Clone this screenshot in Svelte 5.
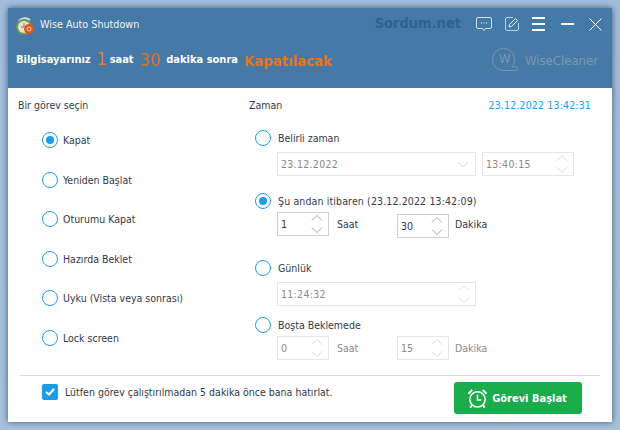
<script>
  const tasks = [
    { label: 'Kapat', on: true },
    { label: 'Yeniden Başlat', on: false },
    { label: 'Oturumu Kapat', on: false },
    { label: 'Hazırda Beklet', on: false },
    { label: 'Uyku (Vista veya sonrası)', on: false },
    { label: 'Lock screen', on: false }
  ];
</script>

{#snippet arrows()}
  <svg class="arrows" width="16" height="22" viewBox="0 0 16 22" fill="none" stroke-width="1">
    <path d="M3 7.500 8 2.500 13 7.500" />
    <path d="M3 14.500 8 19.500 13 14.500" />
  </svg>
{/snippet}

{#snippet radio(on)}
  <span class="radio" class:on></span>
{/snippet}

<div class="desk">
  <div class="window">
    <header>
      <div class="titlebar">
        <svg class="appicon" width="20" height="20" viewBox="0 0 20 20">
          <path d="M4 5 A8 8 0 0 1 15 4" fill="none" stroke="#d8dcd8" stroke-width="2" />
          <circle cx="9" cy="11" r="8" fill="#6f9a58" />
          <circle cx="9" cy="11" r="6" fill="#e6e2d0" />
          <path d="M9 7V11H6" fill="none" stroke="#7a7a6a" stroke-width="1" />
          <circle cx="14" cy="13" r="5" fill="#e2541b" />
          <circle cx="14" cy="13" r="2" fill="none" stroke="#f8d8b0" stroke-width="1" />
        </svg>
        <span class="apptitle">Wise Auto Shutdown</span>
        <span class="sordum">Sordum.net</span>
        <div class="tools">
          <svg width="16" height="15" viewBox="0 0 16 15" fill="none" stroke="#d5e2ee">
            <path d="M2 .5H14Q15.500 .5 15.500 2V10Q15.500 11.500 14 11.500H9.500L8 13.500 6.500 11.500H2Q.5 11.500 .5 10V2Q.5 .5 2 .5Z" />
            <path d="M5 6H6M7.500 6H8.500M10 6H11" stroke="#fff" />
          </svg>
          <svg class="edit" width="14" height="14" viewBox="0 0 14 14" fill="none" stroke="#b9cfe2">
            <path d="M8 .5H2Q.5 .5 .5 2V12Q.5 13.500 2 13.500H12Q13.500 13.500 13.500 12V6" />
            <path d="M4 10 4.500 7.500 10.500 1.500 12.500 3.500 6.500 9.500Z" stroke="#dde8f1" />
          </svg>
          <svg class="menu" width="13" height="14" viewBox="0 0 13 14" stroke="#fff" stroke-width="2">
            <path d="M0 1H13M0 7H13M0 13H13" />
          </svg>
          <svg class="min" width="13" height="2" viewBox="0 0 13 2" stroke="#fff" stroke-width="2">
            <path d="M0 1H13" />
          </svg>
          <svg class="close" width="13" height="13" viewBox="0 0 13 13" stroke="#fff" stroke-width="1">
            <path d="M.5 .5 12.500 12.500M12.500 .5 .5 12.500" />
          </svg>
        </div>
      </div>
      <div class="status">
        <b>Bilgisayarınız</b>
        <span class="n1">1</span>
        <b>saat</b>
        <span class="n2">30</span>
        <b>dakika sonra</b>
        <span class="act">Kapatılacak</span>
        <div class="brand">
          <svg width="26" height="24" viewBox="0 0 26 24" fill="none" stroke="#7f97ad">
            <path d="M20 18.500A11 11 0 1 0 12 22.500H23Q25.500 22.500 25.500 20.500 25.500 18.500 23 18.500 21 18.500 20 20" />
          </svg>
          <span class="bw">W</span>
          <span>WiseCleaner</span>
        </div>
      </div>
    </header>

    <div class="main">
      <section class="left">
        <div class="heading">Bir görev seçin</div>
        <ul>
          {#each tasks as t}
            <li>{@render radio(t.on)}<span>{t.label}</span></li>
          {/each}
        </ul>
      </section>

      <section class="right">
        <div class="headrow">
          <span class="heading">Zaman</span>
          <span class="clock">23.12.2022 13:42:31</span>
        </div>

        <div class="opt first">{@render radio(false)}<span>Belirli zaman</span></div>
        <div class="fields off">
          <div class="field wide"><span class="digits">23.12.2022</span>
            <svg class="chev" width="12" height="7" viewBox="0 0 12 7" fill="none"><path d="M1 1 6 6 11 1" /></svg>
          </div>
          <div class="field time"><span class="digits">13:40:15</span>{@render arrows()}</div>
        </div>

        <div class="opt second">{@render radio(true)}<span class="long">Şu andan itibaren (23.12.2022 13:42:09)</span></div>
        <div class="fields spin">
          <div class="field num"><span>1</span>{@render arrows()}</div>
          <span class="unit saat">Saat</span>
          <div class="field num low"><span>30</span>{@render arrows()}</div>
          <span class="unit">Dakika</span>
        </div>

        <div class="opt third">{@render radio(false)}<span>Günlük</span></div>
        <div class="fields off">
          <div class="field wide"><span class="digits">11:24:32</span>{@render arrows()}</div>
        </div>

        <div class="opt fourth">{@render radio(false)}<span>Boşta Beklemede</span></div>
        <div class="fields spin off">
          <div class="field num"><span>0</span>{@render arrows()}</div>
          <span class="unit saat">Saat</span>
          <div class="field num"><span>15</span>{@render arrows()}</div>
          <span class="unit">Dakika</span>
        </div>
      </section>
    </div>

    <footer>
      <span class="check">
        <svg width="10" height="8" viewBox="0 0 10 8" fill="none" stroke="#fff" stroke-width="2"><path d="M1 4 4 6.500 9 1" /></svg>
      </span>
      <span class="remind">Lütfen görev çalıştırılmadan 5 dakika önce bana hatırlat.</span>
      <button>
        <svg width="21" height="21" viewBox="0 0 22 22" fill="none" stroke="#fff" stroke-width="1.600">
          <circle cx="11" cy="12" r="8" />
          <path d="M11 7V12.500H15" />
          <path d="M1.500 6 5.500 2M16.500 2 20.500 6M5 18.500 3.500 20.500M17 18.500 18.500 20.500" stroke-width="2" />
        </svg>
        <span>Görevi Başlat</span>
      </button>
    </footer>
  </div>
</div>

<style>
  :global(body) {
    background: #a3c0dc;
  }
  .desk {
    width: 620px;
    height: 430px;
    padding: 8px;
    box-sizing: border-box;
    overflow: hidden;
    background: linear-gradient(#a0bddb, #a5c2dc);
    font-family: "DejaVu Sans Condensed", "DejaVu Sans", sans-serif;
    font-stretch: condensed;
    font-size: 10.5px;
    color: #33394a;
  }
  .window {
    width: 604px;
    height: 414px;
    background: #fff;
    box-shadow: 0 0 6px rgba(40, 50, 70, 0.75);
    display: flex;
    flex-direction: column;
  }
  header {
    height: 80px;
    background: #4579a7;
    flex: none;
  }
  .titlebar {
    height: 32px;
    display: flex;
    align-items: center;
    padding: 0 10px 0 7px;
  }
  .appicon {
    margin-top: 3px;
  }
  .apptitle {
    margin-left: 5px;
    font-size: 10.700px;
    color: #eef3f8;
  }
  .sordum {
    margin-left: auto;
    font-size: 14.500px;
    font-weight: 700;
    color: #33608c;
    margin-right: 15px;
    margin-top: -2px;
  }
  .tools {
    display: flex;
    align-items: center;
  }
  .edit { margin-left: 13px; }
  .menu { margin-left: 13px; }
  .min { margin-left: 16px; }
  .close { margin-left: 15px; }
  .status {
    height: 36px;
    margin-top: 1px;
    display: flex;
    align-items: center;
    padding: 0 14px 0 8px;
    color: #fff;
    gap: 6px;
  }
  .status b {
    font-size: 11px;
  }
  .n1, .n2 {
    color: #ee7d16;
    font-size: 17px;
  }
  .n1 {
    width: 8px;
    margin-right: -1px;
  }
  .n2 {
    color: #d9701c;
    font-size: 18px;
  }
  .act {
    font-size: 14.800px;
    font-weight: 700;
    color: #e7751a;
    margin-top: 2px;
  }
  .brand {
    margin-left: auto;
    display: flex;
    align-items: center;
    position: relative;
    gap: 7px;
    color: #7f97ad;
    font-size: 13px;
    margin-top: 2px;
  }
  .bw {
    position: absolute;
    left: 7px;
    top: 3px;
  }
  .main {
    flex: 1;
    display: flex;
    padding: 11px 21px 0 10px;
  }
  .left {
    width: 231px;
    flex: none;
  }
  ul {
    list-style: none;
    margin: 21px 0 0 24px;
    padding: 0;
    display: flex;
    flex-direction: column;
    gap: 23.600px;
  }
  li, .opt {
    display: flex;
    align-items: center;
    gap: 5px;
    height: 16px;
  }
  .radio {
    width: 16px;
    height: 16px;
    flex: none;
    box-sizing: border-box;
    border: 1px solid #1e9be6;
    border-radius: 50%;
    display: flex;
    align-items: center;
    justify-content: center;
  }
  .radio.on::after {
    content: "";
    width: 8px;
    height: 8px;
    border-radius: 50%;
    background: #1e9be6;
  }
  .right {
    flex: 1;
  }
  .headrow {
    display: flex;
    justify-content: space-between;
  }
  .clock {
    color: #1e9be6;
    letter-spacing: 0.160px;
  }
  .opt {
    margin-left: 6px;
    gap: 7px;
  }
  .long {
    letter-spacing: 0.130px;
  }
  .digits {
    letter-spacing: 0.300px;
  }
  .first { margin-top: 19px; }
  .second { margin-top: 17px; }
  .third { margin-top: 24px; }
  .fourth { margin-top: 11px; }
  .fields {
    display: flex;
    align-items: center;
    margin: 6px 0 0 28px;
  }
  .spin {
    margin-top: 3px;
  }
  .arrows, .chev {
    stroke: #a8a8a8;
  }
  .off {
    color: #8a8a8a;
  }
  .off .arrows, .off .chev {
    stroke: #d9d9d9;
  }
  .field {
    height: 24px;
    box-sizing: border-box;
    border: 1px solid #cfcfcf;
    display: flex;
    align-items: center;
    justify-content: space-between;
    padding: 0 3px 0 3px;
  }
  .off .field {
    border-color: #e6e6e6;
  }
  .wide {
    width: 199px;
    padding-right: 6px;
  }
  .time {
    width: 92px;
    margin-left: 6px;
  }
  .wide .arrows {
    margin-right: -3px;
  }
  .num {
    width: 52px;
  }
  .low {
    position: relative;
    top: 2px;
  }
  .unit {
    margin-left: 8px;
  }
  .saat {
    width: 60px;
  }
  .saat + .field + .unit {
    margin-left: 6px;
  }
  footer {
    margin: 0 12px;
    height: 47px;
    box-sizing: border-box;
    flex: none;
    border-top: 1px solid #dcdcdc;
    display: flex;
    align-items: flex-start;
    padding: 8px 18px 0 22px;
  }
  .check {
    width: 16px;
    height: 16px;
    border-radius: 2px;
    background: #1e9be6;
    display: flex;
    align-items: center;
    justify-content: center;
    flex: none;
  }
  .remind {
    margin-left: 7px;
    line-height: 16px;
  }
  button {
    margin-left: auto;
    width: 128px;
    height: 32px;
    margin-top: -2px;
    border: none;
    border-radius: 3px;
    background: #1aab4a;
    color: #fff;
    font: 700 11px "DejaVu Sans Condensed", "DejaVu Sans", sans-serif;
    font-stretch: condensed;
    display: flex;
    align-items: center;
    justify-content: center;
    gap: 4px;
    padding: 0 2px 0 0;
  }
</style>
